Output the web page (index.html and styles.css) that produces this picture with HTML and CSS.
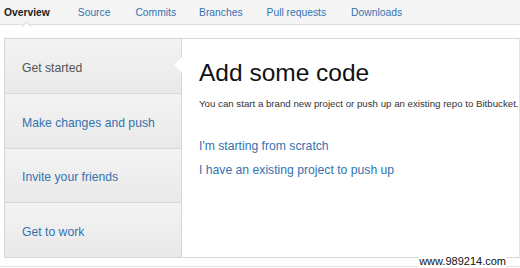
FILE: index.html
```html
<!DOCTYPE html>
<html>
<head>
<meta charset="utf-8">
<link rel="stylesheet" href="styles.css">
</head>
<body>
<nav class="tabs">
  <span class="tab active">Overview</span>
  <span class="tab">Source</span>
  <span class="tab">Commits</span>
  <span class="tab">Branches</span>
  <span class="tab">Pull requests</span>
  <span class="tab">Downloads</span>
</nav>
<div class="panel">
  <ul class="steps">
    <li class="step current">Get started</li>
    <li class="step">Make changes and push</li>
    <li class="step">Invite your friends</li>
    <li class="step">Get to work</li>
  </ul>
  <div class="content">
    <h1>Add some code</h1>
    <p class="lead">You can start a brand new project or push up an existing repo to Bitbucket.</p>
    <a class="opt">I'm starting from scratch</a>
    <a class="opt">I have an existing project to push up</a>
  </div>
</div>
<div class="footline"></div>
<div class="mark">www.989214.com</div>
</body>
</html>
```
FILE: styles.css
```css
* { box-sizing: border-box; margin: 0; padding: 0; }
html, body { width: 520px; height: 268px; overflow: hidden; background: #fff; }
body { font-family: "Liberation Sans", Arial, sans-serif; position: relative; }

.tabs {
  height: 25px;
  background: #f5f5f5;
  border-bottom: 1px solid #dcdcdc;
  display: flex;
  align-items: center;
  padding-left: 4px;
  font-size: 10.3px;
}
.tab { color: #3572b0; white-space: nowrap; }
.tab:nth-child(1) { margin-right: 28px; }
.tab:nth-child(2) { margin-right: 25px; }
.tab:nth-child(3) { margin-right: 23px; }
.tab:nth-child(4) { margin-right: 24px; }
.tab:nth-child(5) { margin-right: 25px; }
.tab.active { color: #222; font-weight: bold; position: relative; }
.tab.active::after {
  content: "";
  position: absolute;
  left: 19px;
  top: 16px;
  width: 6px;
  height: 6px;
  background: #fff;
  border-left: 1px solid #dcdcdc;
  border-top: 1px solid #dcdcdc;
  transform: rotate(45deg);
}

.panel {
  margin: 13px 0 0 4px;
  height: 220px;
  border: 1px solid #d6d6d6;
  border-right: 1px solid #e2e2e2;
  display: flex;
}
.steps {
  list-style: none;
  flex: 0 0 177px;
  border-right: 1px solid #d6d6d6;
  display: flex;
  flex-direction: column;
}
.step {
  flex: 1 1 0;
  display: flex;
  align-items: center;
  padding-left: 17px;
  padding-top: 4px;
  font-size: 12.2px;
  color: #3572b0;
  background: linear-gradient(#f3f3f3, #e9e9e9);
  border-bottom: 1px solid #d9d9d9;
}
.step:last-child { border-bottom: 0; }
.step.current { color: #555; position: relative; }
.step.current::after {
  content: "";
  position: absolute;
  right: -1px;
  top: 18px;
  border: 8px solid transparent;
  border-right: 8px solid #fff;
  border-left: 0;
}

.content { padding: 20px 0 0 17px; flex: 1; min-width: 0; }
h1 {
  font-weight: normal;
  font-size: 24.5px;
  color: #111;
  line-height: 28px;
  margin-bottom: 11px;
}
.lead { font-size: 9.7px; color: #333; margin-bottom: 29px; white-space: nowrap; }
.opt {
  display: block;
  font-size: 12.2px;
  color: #3572b0;
  line-height: 16px;
  margin-bottom: 8px;
}

.footline {
  margin-top: 8px;
  height: 1px;
  background: #e4e4e4;
}
.mark {
  position: absolute;
  right: 14px;
  bottom: 1px;
  font-size: 11px;
  color: #111;
  background: #fff;
  line-height: 12px;
}
```
